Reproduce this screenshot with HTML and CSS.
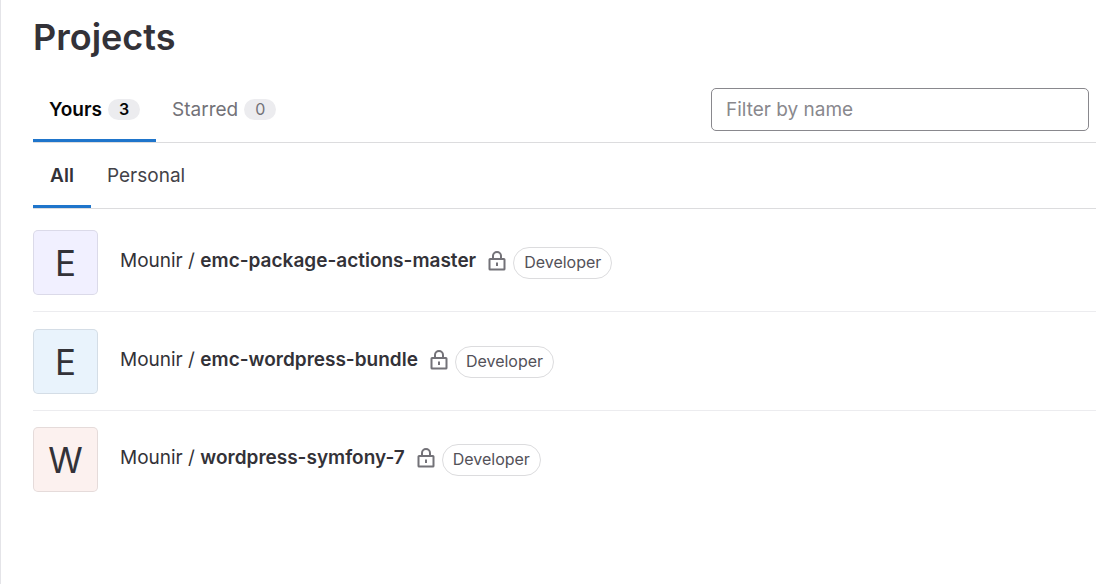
FILE: index.html
```html
<!DOCTYPE html>
<html lang="en">
<head>
<meta charset="utf-8">
<title>Projects</title>
<link rel="stylesheet" href="styles.css">
</head>
<body>
<main class="page">
  <h1 class="title">Projects</h1>
  <div class="topbar">
    <nav class="tabs">
      <a class="tab active" href="#">Yours <span class="count">3</span></a>
      <a class="tab" href="#">Starred <span class="count">0</span></a>
    </nav>
    <input class="filter" type="search" placeholder="Filter by name" aria-label="Filter by name">
  </div>
  <nav class="tabs subtabs">
    <a class="tab active" href="#">All</a>
    <a class="tab" href="#">Personal</a>
  </nav>
  <ul class="projects">
    <li class="project">
      <span class="avatar purple">E</span>
      <a class="name" href="#">Mounir / <strong>emc-package-actions-master</strong></a>
      <svg class="lock" viewBox="0 0 18 20" aria-hidden="true"><rect x="1.500" y="8" width="15" height="10.500" rx=".6"/><path d="M5 8V5a4 4 0 0 1 8 0v3M9 11.500v3.500"/></svg>
      <span class="badge">Developer</span>
    </li>
    <li class="project">
      <span class="avatar blue">E</span>
      <a class="name" href="#">Mounir / <strong>emc-wordpress-bundle</strong></a>
      <svg class="lock" viewBox="0 0 18 20" aria-hidden="true"><rect x="1.500" y="8" width="15" height="10.500" rx=".6"/><path d="M5 8V5a4 4 0 0 1 8 0v3M9 11.500v3.500"/></svg>
      <span class="badge">Developer</span>
    </li>
    <li class="project">
      <span class="avatar red">W</span>
      <a class="name" href="#">Mounir / <strong>wordpress-symfony-7</strong></a>
      <svg class="lock" viewBox="0 0 18 20" aria-hidden="true"><rect x="1.500" y="8" width="15" height="10.500" rx=".6"/><path d="M5 8V5a4 4 0 0 1 8 0v3M9 11.500v3.500"/></svg>
      <span class="badge">Developer</span>
    </li>
  </ul>
</main>
</body>
</html>
```
FILE: styles.css
```css
* { box-sizing: border-box; }
body { margin: 0; background: #fff; color: #333238; font: 19px/28px Inter, "Noto Sans", sans-serif; }
a { color: inherit; text-decoration: none; }
.page { min-height: 100vh; padding: 12px 0 0 32px; border-left: 1px solid #e4e4e8; }
.title { margin: 0; font-size: 36px; line-height: 50px; font-weight: 600; }
.topbar { display: flex; align-items: flex-end; justify-content: space-between; margin-top: 15px; border-bottom: 1px solid #dcdcde; }
.tabs { display: flex; }
.tab { display: flex; align-items: center; justify-content: center; gap: 6px; min-width: 58px; height: 65px; padding: 3px 16px 0; color: #737278; border-bottom: 3px solid transparent; }
.tab.active { color: #050506; font-weight: 600; border-bottom-color: #1f75cb; }
.count { padding: 0 11px; border-radius: 11px; background: #ececef; font-size: 16px; line-height: 21px; }
.filter { width: 378px; height: 43px; margin: 0 7px 11px 0; padding: 0 14px; border: 1px solid #89888d; border-radius: 5px; font: inherit; color: #333238; }
.filter::placeholder { color: #89888d; opacity: 1; }
.subtabs { border-bottom: 1px solid #dcdcde; }
.subtabs .tab { color: #434248; }
.subtabs .tab.active { color: #333238; }
.projects { margin: 5px 0 0; padding: 0; list-style: none; }
.project { display: flex; align-items: center; padding: 16px 0; border-bottom: 1px solid #ececef; }
.project:nth-child(2) { padding-top: 17px; }
.project:last-child { border-bottom: 0; }
.avatar { width: 65px; height: 65px; margin-right: 22px; border: 1px solid rgba(31, 30, 36, 0.1); border-radius: 5px; font-size: 35px; line-height: 64px; text-align: center; }
.purple { background: #f1f0ff; }
.blue { background: #e9f3fc; }
.red { background: #fcf1ef; }
.name { margin-bottom: 3px; }
.name strong { font-weight: 575; }
.lock { width: 18px; height: 20px; margin: 0 7px 4px 12px; fill: none; stroke: #737278; stroke-width: 2; }
.badge { padding: 0 10px 2px; border: 1px solid #dcdcde; border-radius: 16px; font-size: 16px; line-height: 28px; color: #535158; }
```
